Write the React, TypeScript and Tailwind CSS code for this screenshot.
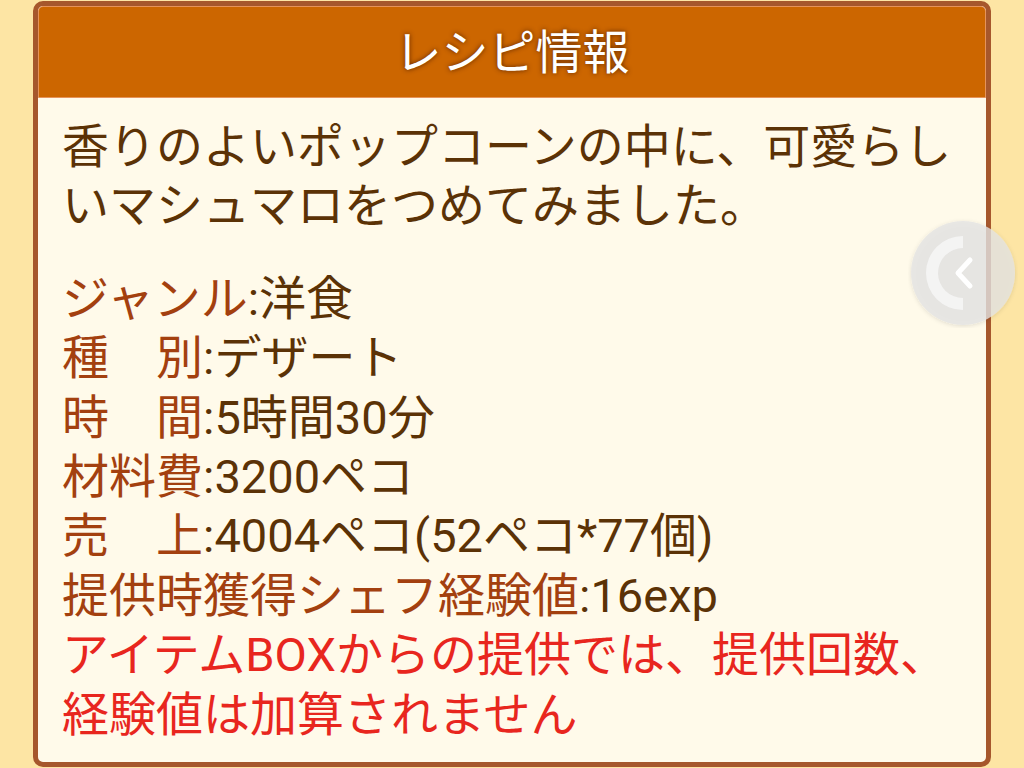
import React from "react";

const font = { fontFamily: '"Roboto", "Noto Sans CJK JP", sans-serif' };

type Row = { label: React.ReactNode; value: string };

const rows: Row[] = [
  { label: "ジャンル", value: "洋食" },
  { label: "種　別", value: "デザート" },
  { label: "時　間", value: "5時間30分" },
  { label: "材料費", value: "3200ペコ" },
  { label: "売　上", value: "4004ペコ(52ペコ*77個)" },
  { label: "提供時獲得シェフ経験値", value: "16exp" },
];

function SideButton() {
  return (
    <div className="absolute left-[908px] top-[218px] w-[110px] h-[110px]">
      <svg width="110" height="110" viewBox="0 0 110 110">
        <defs>
          <filter id="sh" x="-20%" y="-20%" width="140%" height="140%">
            <feDropShadow dx="0" dy="1" stdDeviation="2" floodColor="#000" floodOpacity="0.15" />
          </filter>
        </defs>
        <circle cx="55" cy="55" r="52" fill="rgba(228,228,228,0.78)" filter="url(#sh)" />
        <path d="M55 18 A37 37 0 0 0 55 92 L55 80 A25 25 0 0 1 55 30 Z" fill="rgba(245,245,245,0.9)" />
        <path d="M62 42 L50 55 L62 68" fill="none" stroke="#ffffff" strokeWidth="5" strokeLinecap="round" strokeLinejoin="round" />
      </svg>
    </div>
  );
}

export default function App() {
  return (
    <div className="relative w-[1024px] h-[768px] overflow-hidden bg-[#fde5a4] px-[33px] pt-[1px]" style={font}>
      <div className="h-[766px] rounded-[10px] border-[5px] border-[#a6572c] bg-[#fffaea] overflow-hidden">
        <div className="h-[92px] bg-[#cc6600] border border-[#e6935a] rounded-t-[5px] flex items-center justify-center">
          <h2 className="text-[47px] leading-none text-white [text-shadow:0_0_5px_rgba(80,30,0,0.9)]">
            レシピ情報
          </h2>
        </div>
        <div className="px-[24px] pt-[19px] text-[47px] leading-[59.4px] text-[#5b3206]">
          <p className="whitespace-nowrap">
            香りのよいポップコーンの中に、可愛らし
            <br />
            いマシュマロをつめてみました。
          </p>
          <div className="mt-[33px]">
            {rows.map((r, i) => (
              <div key={i} className="whitespace-nowrap">
                <span className="text-[#a3400f]">{r.label}</span>
                <span>:{r.value}</span>
              </div>
            ))}
            <p className="text-[#e8261e] whitespace-nowrap">
              アイテムBOXからの提供では、提供回数、
              <br />
              経験値は加算されません
            </p>
          </div>
        </div>
      </div>
      <SideButton />
    </div>
  );
}
